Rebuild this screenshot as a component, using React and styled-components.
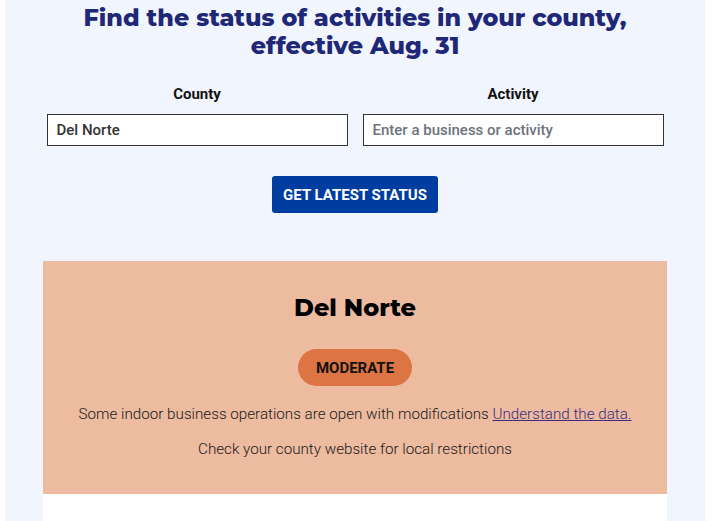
import React from "react";
import styled, { createGlobalStyle } from "styled-components";

const GlobalStyle = createGlobalStyle`
  body {
    margin: 0;
    background: #ffffff;
    font-family: Roboto, "Liberation Sans", sans-serif;
  }
`;

const Panel = styled.div`
  margin-left: 5px;
  width: 700px;
  min-height: 521px;
  background: #f1f5fd;
  padding-top: 4px;
  box-sizing: border-box;
`;

const Title = styled.h1`
  margin: 0;
  text-align: center;
  font-family: Montserrat, Lato, "Noto Sans", sans-serif;
  font-weight: 800;
  font-size: 23.8px;
  line-height: 28px;
  color: #1f2777;
`;

const Form = styled.form`
  width: 617px;
  margin: 25px auto 0;
  display: grid;
  grid-template-columns: 1fr 1fr;
  column-gap: 15px;
`;

const Field = styled.label`
  display: flex;
  flex-direction: column;
  align-items: center;
  gap: 11px;
`;

const LabelText = styled.span`
  font-weight: 700;
  font-size: 15px;
  line-height: 18px;
  color: #111;
`;

const Input = styled.input`
  width: 100%;
  height: 32px;
  box-sizing: border-box;
  border: 1px solid #333;
  background: #fff;
  padding: 0 9px;
  font-family: Roboto, "Liberation Sans", sans-serif;
  font-weight: 500;
  font-size: 15px;
  color: #333;
  &::placeholder {
    color: #6d737c;
  }
`;

const Submit = styled.button`
  display: block;
  margin: 30px auto 0;
  width: 166px;
  height: 37px;
  border: none;
  border-radius: 3px;
  background: #003da1;
  color: #fff;
  font-family: Roboto, "Liberation Sans", sans-serif;
  font-weight: 700;
  font-size: 15px;
  text-transform: uppercase;
`;

const Card = styled.section`
  margin: 48px auto 0;
  width: 624px;
  background: #edbba0;
  padding: 32px 0 35px;
  display: flex;
  flex-direction: column;
  align-items: center;
`;

const County = styled.h2`
  margin: 0;
  font-family: Montserrat, Lato, "Noto Sans", sans-serif;
  font-weight: 800;
  font-size: 24px;
  line-height: 30px;
  color: #000;
`;

const Tier = styled.span`
  margin-top: 26px;
  width: 114px;
  height: 37px;
  border-radius: 19px;
  background: ${(p) => p.color};
  display: flex;
  align-items: center;
  justify-content: center;
  font-weight: 700;
  font-size: 15px;
  color: #111;
  text-transform: uppercase;
`;

const Note = styled.p`
  margin: ${(p) => p.gap}px 0 0;
  font-weight: 300;
  font-size: 15.2px;
  line-height: 20px;
  color: #1a1a1a;
  text-align: center;
  a {
    color: #3d2c7c;
  }
`;

const NextCard = styled.div`
  width: 624px;
  height: 40px;
  margin: 0 auto;
  background: #fff;
`;

export default function App() {
  return (
    <>
      <GlobalStyle />
      <Panel>
        <Title>
          Find the status of activities in your county,
          <br />
          effective Aug. 31
        </Title>
        <Form onSubmit={(e) => e.preventDefault()}>
          <Field>
            <LabelText>County</LabelText>
            <Input defaultValue="Del Norte" />
          </Field>
          <Field>
            <LabelText>Activity</LabelText>
            <Input placeholder="Enter a business or activity" />
          </Field>
        </Form>
        <Submit type="button">Get latest status</Submit>
        <Card>
          <County>Del Norte</County>
          <Tier color="#dc7443">Moderate</Tier>
          <Note gap={18}>
            Some indoor business operations are open with modifications{" "}
            <a href="#data">Understand the data.</a>
          </Note>
          <Note gap={15}>Check your county website for local restrictions</Note>
        </Card>
        <NextCard />
      </Panel>
    </>
  );
}
